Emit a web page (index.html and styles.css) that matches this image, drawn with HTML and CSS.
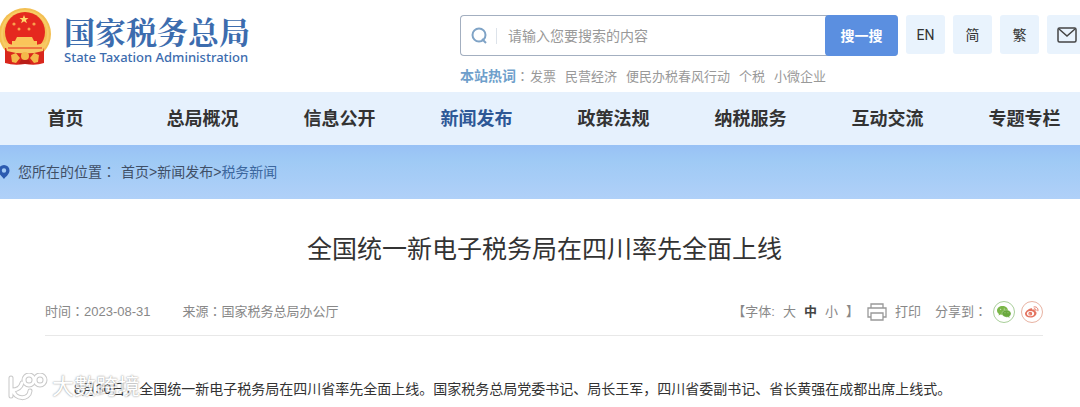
FILE: index.html
```
<!DOCTYPE html>
<html lang="zh-CN">
<head>
  <meta charset="UTF-8">
  <meta name="viewport" content="width=device-width, initial-scale=1.0">
  <title>全国统一新电子税务局在四川率先全面上线</title>
  <link rel="stylesheet" href="styles.css">
</head>
<body>
  <header class="header">
    <a class="logo" href="#">
      <svg class="emblem" viewBox="0 0 52 58" aria-hidden="true">
        <circle cx="25" cy="26" r="26" fill="#f3bf52"/>
        <circle cx="25" cy="26" r="23" fill="none" stroke="#f8cb66" stroke-width="2"/>
        <path d="M5 40L5 55q9 3 20 1q11 2 19-1V40z" fill="#d9261c"/>
        <circle cx="25" cy="24" r="20" fill="#e5281f"/>
        <path d="M24 7l1.200 3h3.300l-2.600 2 1 3.200-2.900-2-2.900 2 1-3.200-2.600-2h3.300z" fill="#ffd76a"/>
        <g fill="#f9a04c">
          <circle cx="14" cy="16" r="1.600"/><circle cx="34" cy="16" r="1.600"/>
          <circle cx="19" cy="21" r="1.500"/><circle cx="29" cy="21" r="1.500"/>
        </g>
        <path d="M17 29h15l2 4h3v4H12v-4h3z" fill="#fac55a"/>
        <path d="M4 33q5 4 12 4h17q8 0 13-4l-3 10q-18 5-36 0z" fill="#f8c763"/>
        <path d="M8 40h34" stroke="#e5281f" stroke-width="1"/>
        <circle cx="25" cy="48" r="4" fill="#f4b84a"/>
        <path d="M11 47l5-2 4 5-4 5-4-1zM39 47l-5-2-4 5 4 5 4-1z" fill="#f4b84a"/>
        <path d="M21 52h8l2 4H19z" fill="#b91d18"/>
      </svg>
      <span class="logo-text">
        <strong>国家税务总局</strong>
        <span class="logo-en">State Taxation Administration</span>
      </span>
    </a>

    <div class="tools">
      <div class="search-area">
        <form class="search">
          <svg class="search-icon" viewBox="0 0 18 18" aria-hidden="true">
            <circle cx="8" cy="8" r="6.500"/>
            <path d="M11 12l4 4"/>
          </svg>
          <input type="text" placeholder="请输入您要搜索的内容" aria-label="搜索">
          <button type="button">搜一搜</button>
        </form>
        <div class="hot">
          <strong>本站热词</strong><span class="punct" lang="zh-TW">：</span>
          <a href="#">发票</a>
          <a href="#">民营经济</a>
          <a href="#">便民办税春风行动</a>
          <a href="#">个税</a>
          <a href="#">小微企业</a>
        </div>
      </div>
      <div class="langs">
        <a href="#">EN</a>
        <a href="#">简</a>
        <a href="#">繁</a>
        <a href="#" aria-label="邮箱">
          <svg class="mail-icon" viewBox="0 0 20 16" aria-hidden="true">
            <rect x="1" y="1" width="18" height="14" rx="1.500"/>
            <path d="M2 2l8 7 8-7"/>
          </svg>
        </a>
      </div>
    </div>
  </header>

  <nav class="nav">
    <ul>
      <li><a href="#">首页</a></li>
      <li><a href="#">总局概况</a></li>
      <li><a href="#">信息公开</a></li>
      <li><a class="active" href="#">新闻发布</a></li>
      <li><a href="#">政策法规</a></li>
      <li><a href="#">纳税服务</a></li>
      <li><a href="#">互动交流</a></li>
      <li><a href="#">专题专栏</a></li>
    </ul>
  </nav>

  <div class="crumbs">
    <svg class="pin-icon" viewBox="0 0 10 14" aria-hidden="true">
      <path fill-rule="evenodd" d="M4 0a5.500 5.500 0 0 1 5.500 5.500C9.500 9 6 11.500 4 14 2 11.500-1.500 9-1.500 5.500A5.500 5.500 0 0 1 4 0zM4 3.300a2.200 2.200 0 1 0 0 4.400 2.200 2.200 0 0 0 0-4.400z" fill="#2c5bb0"/>
    </svg>
    <span class="crumbs-label">您所在的位置<span class="punct" lang="zh-TW">：</span></span>
    <a href="#">首页</a>&gt;<a href="#">新闻发布</a>&gt;<a class="current" href="#">税务新闻</a>
  </div>

  <main class="article">
    <h1>全国统一新电子税务局在四川率先全面上线</h1>

    <div class="meta">
      <div class="meta-info">
        <span>时间<span class="punct" lang="zh-TW">：</span>2023-08-31</span>
        <span>来源<span class="punct" lang="zh-TW">：</span>国家税务总局办公厅</span>
      </div>
      <div class="meta-tools">
        <div class="font-size">
          <span>【字体:</span>
          <button type="button">大</button>
          <button type="button" class="selected">中</button>
          <button type="button">小</button>
          <span>】</span>
        </div>
        <button type="button" class="print">
          <svg viewBox="0 0 20 18" aria-hidden="true">
            <path d="M4 5V1h12v4M4 14H1V5h18v9h-3M4 10h12v7H4z"/>
          </svg>
          打印
        </button>
        <div class="share">
          <span>分享到<span class="punct" lang="zh-TW">：</span></span>
          <a class="wechat" href="#" aria-label="微信">
            <svg viewBox="0 0 14 12" aria-hidden="true">
              <path d="M5.500 0C2.400 0 0 2 0 4.500c0 1.400.8 2.600 2 3.400L1.500 9.500l2-1c.6.200 1.300.3 2 .3C8.500 8.800 11 7 11 4.500S8.500 0 5.500 0z" fill="#7ab648"/>
              <path d="M9.500 4C7 4 5 5.600 5 7.600s2 3.600 4.500 3.600c.5 0 1-.1 1.500-.2l1.700 1-.4-1.500c1-.7 1.700-1.700 1.700-2.900C14 5.600 12 4 9.500 4z" fill="#69a83c" stroke="#fff" stroke-width=".3"/>
              <g fill="#fff"><circle cx="3.700" cy="3.300" r=".5"/><circle cx="7.200" cy="3" r=".5"/><circle cx="8" cy="6.800" r=".4"/><circle cx="11" cy="6.800" r=".4"/></g>
            </svg>
          </a>
          <a class="weibo" href="#" aria-label="微博">
            <svg viewBox="0 0 14 12" aria-hidden="true">
              <path d="M5.500 2.500c1.200-.5 2 .1 1.800 1.200 1.500-.6 2.900-.2 2.500 1.200 1 .3 1.700 1 1.700 2C11.500 9.500 8.800 11.500 5.500 11.500S0 10 0 7.800c0-2 3-4.700 5.500-5.300z" fill="#e4735f"/>
              <ellipse cx="5.500" cy="7.600" rx="3.600" ry="2.600" fill="#fff"/>
              <circle cx="5.300" cy="7.700" r="1.900" fill="#e4735f"/>
              <circle cx="4.800" cy="8" r=".6" fill="#fff"/>
              <path d="M9 .9c2.500-.5 4.500 1.400 3.900 3.900M9.300 2.800c1.200-.2 2 .6 1.700 1.700" fill="none" stroke="#e4735f" stroke-linecap="round"/>
            </svg>
          </a>
        </div>
      </div>
    </div>

    <div class="content">
      <p>8月30日，全国统一新电子税务局在四川省率先全面上线。国家税务总局党委书记、局长王军，四川省委副书记、省长黄强在成都出席上线式。</p>
      <div class="watermark">
        <svg viewBox="0 0 40 28" aria-hidden="true">
          <g class="mark-edge">
            <path d="M3 5v18M4 17c6 0 9-3 10-7M5 17c2 10 16 10 17 1"/>
            <circle cx="21" cy="7" r="5"/><circle cx="32" cy="7" r="5"/>
          </g>
          <g class="mark-fill">
            <path d="M3 5v18M4 17c6 0 9-3 10-7M5 17c2 10 16 10 17 1"/>
            <circle cx="21" cy="7" r="5"/><circle cx="32" cy="7" r="5"/>
          </g>
        </svg>
        <span>大數跨境</span>
      </div>
    </div>
  </main>
</body>
</html>
```
FILE: styles.css
```
* {
  box-sizing: border-box;
}

body {
  margin: 0;
  background: #fff;
  color: #333;
  font-family: "Liberation Sans", "Noto Sans CJK SC", sans-serif;
  font-size: 14px;
  line-height: 20px;
  overflow-x: hidden;
}

a {
  color: inherit;
  text-decoration: none;
}

button {
  padding: 0;
  border: none;
  background: none;
  color: inherit;
  font: inherit;
  cursor: pointer;
}

/* centered full-width colon */
.punct {
  font-family: "Noto Sans CJK TC", sans-serif;
  line-height: 1;
}

/* header */
.header {
  display: flex;
  justify-content: space-between;
  height: 92px;
  overflow: hidden;
}

.logo {
  display: flex;
  gap: 12px;
  padding-top: 8px;
  color: #3c6cae;
}

.emblem {
  width: 52px;
  height: 58px;
}

.logo-text {
  display: flex;
  flex-direction: column;
  padding-top: 5px;
}

.logo-text strong {
  font-family: "Noto Serif CJK SC", "Noto Sans CJK SC", serif;
  font-size: 31px;
  line-height: 36px;
}

.logo-en {
  font-family: "Noto Sans", sans-serif;
  font-size: 13px;
  font-weight: 500;
  line-height: 16px;
}

.tools {
  display: flex;
  gap: 8px;
  margin-right: -6px;
  padding-top: 15px;
}

.search {
  display: flex;
  align-items: center;
  width: 438px;
  height: 41px;
  border: 1px solid #a3afc0;
  border-right: none;
  border-radius: 4px;
}

.search-icon {
  width: 18px;
  height: 18px;
  margin-left: 10px;
  fill: none;
  stroke: #7fa3c6;
  stroke-width: 2;
}

.search input {
  flex: 1;
  min-width: 0;
  height: 16px;
  margin-left: 7px;
  padding: 0 0 0 11px;
  border: none;
  border-left: 1px solid #dde3ea;
  outline: none;
  font: inherit;
  line-height: 16px;
}

.search input::placeholder {
  color: #999;
}

.search button {
  width: 73px;
  height: 41px;
  border-radius: 4px;
  background: #5b8fe0;
  color: #fff;
  font-weight: bold;
}

.hot {
  display: flex;
  align-items: baseline;
  gap: 9px;
  padding-top: 10px;
  color: #999;
  font-size: 13px;
}

.hot strong {
  color: #6f9fcb;
  font-size: 14px;
}

.hot .punct {
  width: 14px;
  margin: 0 -9px;
}

.langs {
  display: flex;
  gap: 8px;
}

.langs a {
  display: flex;
  align-items: center;
  justify-content: center;
  width: 39px;
  height: 39px;
  border-radius: 3px;
  background: #e9f3fd;
  font-family: Roboto, "Noto Sans CJK SC", sans-serif;
}

.mail-icon {
  width: 20px;
  height: 16px;
  fill: none;
  stroke: #444;
  stroke-width: 1.5;
}

/* nav */
.nav {
  overflow: hidden;
  background: #e6f1fd;
}

.nav ul {
  display: grid;
  grid-template-columns: repeat(8, 1fr);
  margin: 0 -13px 0 -3px;
  padding: 2px 0 0;
  list-style: none;
}

.nav a {
  display: block;
  font-size: 18px;
  font-weight: bold;
  line-height: 51px;
  text-align: center;
}

.nav .active {
  color: #2d5796;
}

/* breadcrumb */
.crumbs {
  display: flex;
  align-items: center;
  height: 54px;
  background: linear-gradient(#98c1f5, #9fcaf5 30%, #b0d0f8);
  color: #3f4f66;
}

.pin-icon {
  width: 10px;
  height: 14px;
  margin-right: 8px;
}

.crumbs-label {
  margin-right: 5px;
}

.crumbs .current {
  color: #3c679e;
}

/* article */
.article h1 {
  margin: 32px 36px 34px 45px;
  font-size: 25px;
  font-weight: normal;
  line-height: 36px;
  text-align: center;
}

.meta {
  display: flex;
  justify-content: space-between;
  margin: 0 37px 0 45px;
  padding-bottom: 12px;
  border-bottom: 1px solid #e8e8e8;
  color: #888;
  font-size: 13px;
  line-height: 22px;
}

.meta-info {
  display: flex;
  gap: 32px;
}

.meta-tools {
  display: flex;
  gap: 14px;
}

.font-size {
  display: flex;
  align-items: baseline;
  gap: 8px;
  margin-right: -6px;
}

.font-size .selected {
  color: #444;
  font-weight: bold;
}

.print {
  display: flex;
  align-items: center;
  gap: 8px;
}

.print svg {
  width: 20px;
  height: 18px;
  fill: none;
  stroke: #999;
  stroke-width: 1.3;
}

.share {
  display: flex;
  gap: 6px;
}

.share a {
  display: flex;
  align-items: center;
  justify-content: center;
  width: 22px;
  height: 22px;
  border: 1px solid #a9cf9a;
  border-radius: 50%;
}

.share .weibo {
  border-color: #e8b3a3;
}

.share svg {
  width: 14px;
  height: 12px;
}

.content {
  position: relative;
  padding: 43px 45px 8px 74px;
}

.content p {
  margin: 0;
}

.watermark {
  position: absolute;
  bottom: 6px;
  left: 8px;
  display: flex;
  align-items: center;
  gap: 4px;
  color: #fff;
  font-size: 22px;
  line-height: 28px;
  text-shadow: 0 0 2px #888, 0 0 1px #aaa;
  opacity: 0.8;
}

.watermark svg {
  width: 40px;
  height: 28px;
  fill: none;
  stroke-linecap: round;
}

.mark-edge {
  stroke: #bbb;
  stroke-width: 5;
}

.mark-fill {
  stroke: #fff;
  stroke-width: 3;
}
```
